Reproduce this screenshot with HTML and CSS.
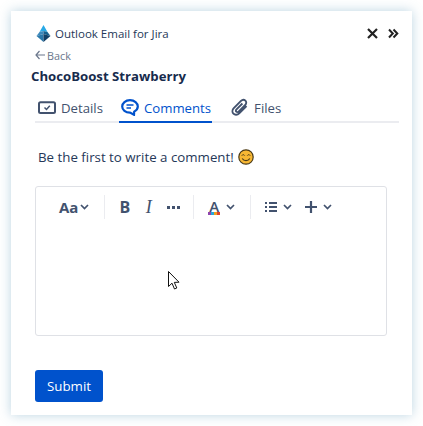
FILE: index.html
```html
<!DOCTYPE html>
<html lang="en">
<head>
  <meta charset="UTF-8" />
  <meta name="viewport" content="width=device-width, initial-scale=1.0"/>
  <title>Outlook Email for Jira</title>
  <link rel="stylesheet" href="styles.css">
</head>
<body>

  <div class="panel">
    <div class="topbar">
      <div class="brand">
        <svg class="logo" width="15" height="17" viewBox="0 0 15 17">
          <path d="M7.5 0 L11.5 7 L7.5 6 L3.5 7 Z" fill="#29a9e6"/>
          <path d="M3.5 7 L7.5 6 L7.5 9 L0.5 11 Z" fill="#3c88bb"/>
          <path d="M11.5 7 L7.5 6 L7.5 9 L14.5 11 Z" fill="#17618f"/>
          <path d="M0.5 11 L7.5 9 L7.5 17 Z" fill="#2a78aa"/>
          <path d="M14.5 11 L7.5 9 L7.5 17 Z" fill="#123f66"/>
        </svg>
        <span>Outlook Email for Jira</span>
      </div>
      <div class="window-icons">
        <svg width="11" height="11" viewBox="0 0 11 11"><path d="M1 1 L10 10 M10 1 L1 10" stroke="#222" stroke-width="2.2" fill="none"/></svg>
        <svg width="11" height="11" viewBox="0 0 11 11"><path d="M1 1.5 L4.8 5.5 L1 9.5 M5.5 1.5 L9.3 5.5 L5.5 9.5" stroke="#222" stroke-width="2" fill="none"/></svg>
      </div>
    </div>

    <a class="back" href="#">
      <svg width="10" height="10" viewBox="0 0 10 10"><path d="M4.5 1 L1 5 L4.5 9 M1 5 H10" stroke="#6b778c" stroke-width="1.2" fill="none"/></svg>
      <span>Back</span>
    </a>
    <h1>ChocoBoost Strawberry</h1>

    <div class="tabs">
      <a class="tab" href="#">
        <svg width="18" height="14" viewBox="0 0 18 14"><rect x="1" y="1.2" width="16" height="10.8" rx="1.5" fill="none" stroke="#42526e" stroke-width="2"/><path d="M6.5 6.5 L8.5 8.5 L11.8 4.8" fill="none" stroke="#42526e" stroke-width="1.5"/></svg>
        <span>Details</span>
      </a>
      <a class="tab active" href="#">
        <svg width="18" height="17" viewBox="0 0 18 17"><path d="M9 1.2 C4.5 1.2 1.2 4 1.2 7.5 C1.2 11 4.5 13.6 9 13.6 L13 15.8 L13.2 12.6 C15.4 11.4 16.8 9.6 16.8 7.5 C16.8 4 13.5 1.2 9 1.2 Z" fill="none" stroke="#0052cc" stroke-width="2.2"/><path d="M5.5 6 H12.5 M5.5 9 H10" stroke="#0052cc" stroke-width="1.7"/></svg>
        <span>Comments</span>
      </a>
      <a class="tab" href="#">
        <svg width="18" height="19" viewBox="0 0 18 19"><path d="M15.5 8 L8.2 15.4 C6.4 17.2 3.8 17.2 2.4 15.7 C1 14.2 1.2 11.8 2.8 10.2 L10 2.9 C11.3 1.6 13.2 1.5 14.4 2.7 C15.6 3.9 15.5 5.7 14.2 7 L7.6 13.6 C6.9 14.3 5.9 14.3 5.3 13.7 C4.7 13.1 4.8 12.1 5.5 11.4 L11.4 5.5" fill="none" stroke="#42526e" stroke-width="1.9"/></svg>
        <span>Files</span>
      </a>
    </div>

    <p class="first-comment">
      Be the first to write a comment!
      <svg class="smile" width="16" height="16" viewBox="0 0 16 16"><circle cx="8" cy="8" r="7.2" fill="#f7b733" stroke="#4a3a18" stroke-width="1.2"/><path d="M3.8 6.6 C4.5 5.4 6 5.4 6.7 6.6 M9.3 6.6 C10 5.4 11.5 5.4 12.2 6.6" fill="none" stroke="#4a3a18" stroke-width="1"/><path d="M4.2 9.5 C6 12.4 10 12.4 11.8 9.5" fill="none" stroke="#4a3a18" stroke-width="1.2"/></svg>
    </p>

    <div class="editor">
      <div class="toolbar">
        <div class="tool-group first">
          <span class="tool-text">Aa</span>
          <svg class="chev" width="9" height="6" viewBox="0 0 9 6"><path d="M1 1 L4.5 4.5 L8 1" fill="none" stroke="#42526e" stroke-width="1.7"/></svg>
        </div>
        <div class="tool-group marks">
          <span class="tool-text bold">B</span>
          <span class="tool-text italic">I</span>
          <svg width="13" height="3" viewBox="0 0 13 3"><path d="M0 0h3v3H0zM5 0h3v3H5zM10 0h3v3h-3z" fill="#42526e"/></svg>
        </div>
        <div class="tool-group color">
          <div class="color-a">
            <span class="color-letter">A</span>
            <div class="color-bar"></div>
          </div>
          <svg class="chev" width="9" height="6" viewBox="0 0 9 6"><path d="M1 1 L4.5 4.5 L8 1" fill="none" stroke="#42526e" stroke-width="1.7"/></svg>
        </div>
        <div class="tool-group last">
          <svg width="12" height="10" viewBox="0 0 12 10"><path d="M0 0h2v2H0zM0 4h2v2H0zM0 8h2v2H0zM4 0h8v2H4zM4 4h8v2H4zM4 8h8v2H4z" fill="#42526e"/></svg>
          <svg class="chev" width="9" height="6" viewBox="0 0 9 6"><path d="M1 1 L4.5 4.5 L8 1" fill="none" stroke="#42526e" stroke-width="1.7"/></svg>
          <svg class="plus" width="12" height="12" viewBox="0 0 12 12"><path d="M6 0 V12 M0 6 H12" stroke="#42526e" stroke-width="2.2"/></svg>
          <svg class="chev" width="9" height="6" viewBox="0 0 9 6"><path d="M1 1 L4.5 4.5 L8 1" fill="none" stroke="#42526e" stroke-width="1.7"/></svg>
        </div>
      </div>
    </div>

    <button class="submit">Submit</button>
  </div>

  <svg class="cursor" width="12" height="19" viewBox="0 0 12 19"><path d="M0.5 0.5 V15.5 L4 12.2 L6.5 18 L8.8 17 L6.3 11.4 L11 11.2 Z" fill="#fff" stroke="#111" stroke-width="1"/></svg>

</body>
</html>
```

FILE: styles.css
```css
body {
  margin: 0;
  width: 423px;
  height: 426px;
  overflow: hidden;
  position: relative;
  background: #fff;
  font-family: 'Open Sans', 'Noto Sans', sans-serif;
  color: #172b4d;
}

.panel {
  margin: 11px 0 0 11px;
  width: 401px;
  height: 404px;
  box-sizing: border-box;
  padding: 14px 13px 0 24px;
  background: white;
  box-shadow: 0 0 11px rgba(95, 155, 185, 0.42);
}

.topbar {
  display: flex;
  justify-content: space-between;
  align-items: center;
  height: 17px;
  padding-left: 1px;
}

.brand {
  display: flex;
  align-items: center;
  gap: 4px;
  font-size: 11.5px;
  color: #253858;
}

.window-icons {
  display: flex;
  gap: 10px;
}

.back {
  display: flex;
  align-items: center;
  gap: 2px;
  margin-top: 5px;
  height: 16px;
  font-size: 10.8px;
  color: #6b778c;
  text-decoration: none;
}

h1 {
  margin: 4px 0 0 -4px;
  font-size: 13.2px;
  line-height: 18px;
  font-weight: 700;
  color: #172b4d;
}

.tabs {
  display: flex;
  margin: 5px 0 0 0;
  height: 31px;
  width: 364px;
  border-bottom: 2px solid #ebecf0;
}

.tab {
  display: flex;
  align-items: center;
  gap: 5px;
  height: 27px;
  padding: 4px 0 0 3px;
  margin-right: 16px;
  font-size: 13.2px;
  color: #42526e;
  text-decoration: none;
}

.tab.active {
  padding: 4px 1px 0 2px;
  color: #0052cc;
  border-bottom: 2px solid #0052cc;
}

.first-comment {
  display: flex;
  align-items: center;
  gap: 4px;
  margin: 25px 0 0 3px;
  height: 18px;
  font-size: 13.3px;
  color: #253858;
}

.editor {
  margin: 20px 0 0 0;
  width: 352px;
  height: 150px;
  box-sizing: border-box;
  border: 1px solid #dfe1e6;
  border-radius: 3px;
}

.toolbar {
  display: flex;
  align-items: center;
  margin-top: 8px;
  height: 24px;
}

.tool-group {
  display: flex;
  align-items: center;
  height: 24px;
  padding: 0 13px 0 14px;
  border-right: 1px solid #ebecf0;
  color: #42526e;
}

.tool-group.first {
  padding-left: 23px;
  padding-right: 15px;
  gap: 2px;
}

.tool-group.marks {
  gap: 13px;
}

.tool-group.color {
  gap: 6px;
  padding-left: 14px;
  padding-right: 15px;
}

.tool-group.last {
  border-right: none;
  gap: 6px;
}

.plus {
  margin-left: 7px;
}

.tool-text {
  font-size: 15px;
  font-weight: 700;
}

.tool-text.bold {
  font-size: 16px;
}

.tool-text.italic {
  width: 11px;
  text-align: center;
  font-style: italic;
  font-size: 18px;
  font-weight: 400;
  font-family: 'Liberation Serif', serif;
}

.color-a {
  display: flex;
  flex-direction: column;
  align-items: center;
  width: 12px;
}

.color-letter {
  font-size: 15px;
  font-weight: 600;
  line-height: 12px;
}

.color-bar {
  width: 12px;
  height: 3px;
  background: linear-gradient(to right, #8e44ad 25%, #2aa5d8 25% 50%, #f0a020 50% 75%, #e0402a 75%);
}

.submit {
  display: block;
  margin-top: 34px;
  width: 68px;
  height: 32px;
  padding: 0;
  background: #0052cc;
  border: none;
  border-radius: 3px;
  color: white;
  font-family: inherit;
  font-size: 13.3px;
  cursor: pointer;
}

.cursor {
  position: absolute;
  left: 168px;
  top: 271px;
}
```
